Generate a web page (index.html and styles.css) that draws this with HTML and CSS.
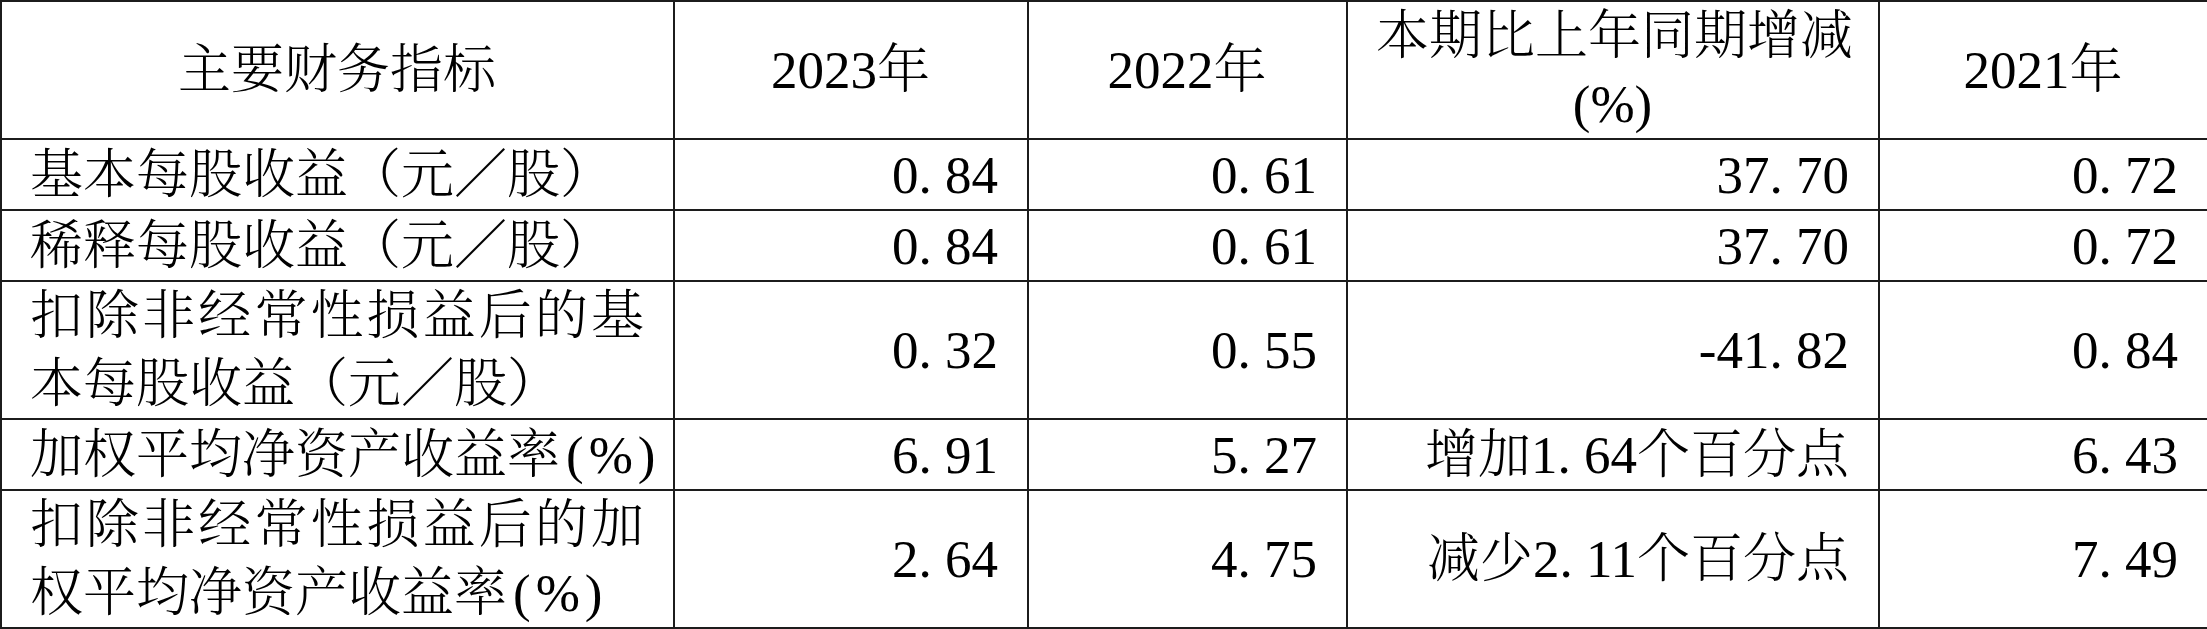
FILE: index.html
```html
<!DOCTYPE html>
<html lang="zh-CN">
<head>
    <meta charset="UTF-8">
    <title>主要财务指标</title>
    <link rel="stylesheet" href="styles.css">
</head>
<body>
    <!-- 主要财务指标表 -->
    <table class="fin-table">
        <colgroup>
            <col class="col-name">
            <col class="col-2023">
            <col class="col-2022">
            <col class="col-change">
            <col class="col-2021">
        </colgroup>
        <tr class="row-head">
            <th>主要财务指标</th>
            <th>2023年</th>
            <th>2022年</th>
            <th class="head-wrap">本期比上年同期增减<br>(%)</th>
            <th>2021年</th>
        </tr>
        <tr class="row-single">
            <td class="name nowrap">基本每股收益（元／股）</td>
            <td class="num">0<span class="dot">.</span>84</td>
            <td class="num">0<span class="dot">.</span>61</td>
            <td class="num">37<span class="dot">.</span>70</td>
            <td class="num">0<span class="dot">.</span>72</td>
        </tr>
        <tr class="row-single">
            <td class="name nowrap">稀释每股收益（元／股）</td>
            <td class="num">0<span class="dot">.</span>84</td>
            <td class="num">0<span class="dot">.</span>61</td>
            <td class="num">37<span class="dot">.</span>70</td>
            <td class="num">0<span class="dot">.</span>72</td>
        </tr>
        <tr class="row-double">
            <td class="name">扣除非经常性损益后的基本每股收益（元／股）</td>
            <td class="num">0<span class="dot">.</span>32</td>
            <td class="num">0<span class="dot">.</span>55</td>
            <td class="num">-41<span class="dot">.</span>82</td>
            <td class="num">0<span class="dot">.</span>84</td>
        </tr>
        <tr class="row-single">
            <td class="name nowrap">加权平均净资产收益率<span class="pct">(%)</span></td>
            <td class="num">6<span class="dot">.</span>91</td>
            <td class="num">5<span class="dot">.</span>27</td>
            <td class="num">增加1<span class="dot">.</span>64个百分点</td>
            <td class="num">6<span class="dot">.</span>43</td>
        </tr>
        <tr class="row-double">
            <td class="name">扣除非经常性损益后的加权平均净资产收益率<span class="pct">(%)</span></td>
            <td class="num">2<span class="dot">.</span>64</td>
            <td class="num">4<span class="dot">.</span>75</td>
            <td class="num">减少2<span class="dot">.</span>11个百分点</td>
            <td class="num">7<span class="dot">.</span>49</td>
        </tr>
    </table>
</body>
</html>
```

FILE: styles.css
```css
body {
    margin: 0;
    padding: 0;
    background: #ffffff;
    color: #000000;
    font-family: "Liberation Serif", "Noto Serif CJK SC", "Noto Sans CJK SC", serif;
}

/* 表格 */
.fin-table {
    width: 2207px;
    border-collapse: collapse;
    table-layout: fixed;
    font-size: 53px;
    font-weight: 300;
}
.col-name { width: 673px; }
.col-2023 { width: 354px; }
.col-2022 { width: 319px; }
.col-change { width: 532px; }
.col-2021 { width: 329px; }

.fin-table th,
.fin-table td {
    border: 2px solid #1c1c1c;
    padding: 0 29px 0 28px;
    vertical-align: middle;
    line-height: 68px;
}
.fin-table th {
    font-weight: 300;
    text-align: center;
    white-space: nowrap;
}

/* 行高 */
.row-head { height: 138px; }
.row-single { height: 71px; }
.row-double { height: 138px; }

.head-wrap {
    line-height: 66px;
}

/* 指标名称 */
.name {
    text-align: justify;
    text-align-last: left;
}
.nowrap {
    white-space: nowrap;
}
.pct {
    margin-left: 6px;
    letter-spacing: 5px;
    white-space: nowrap;
}

/* 数值 */
.num {
    text-align: right;
    white-space: nowrap;
}
.dot {
    display: inline-block;
    width: 0.5em;
    text-align: left;
}
```
